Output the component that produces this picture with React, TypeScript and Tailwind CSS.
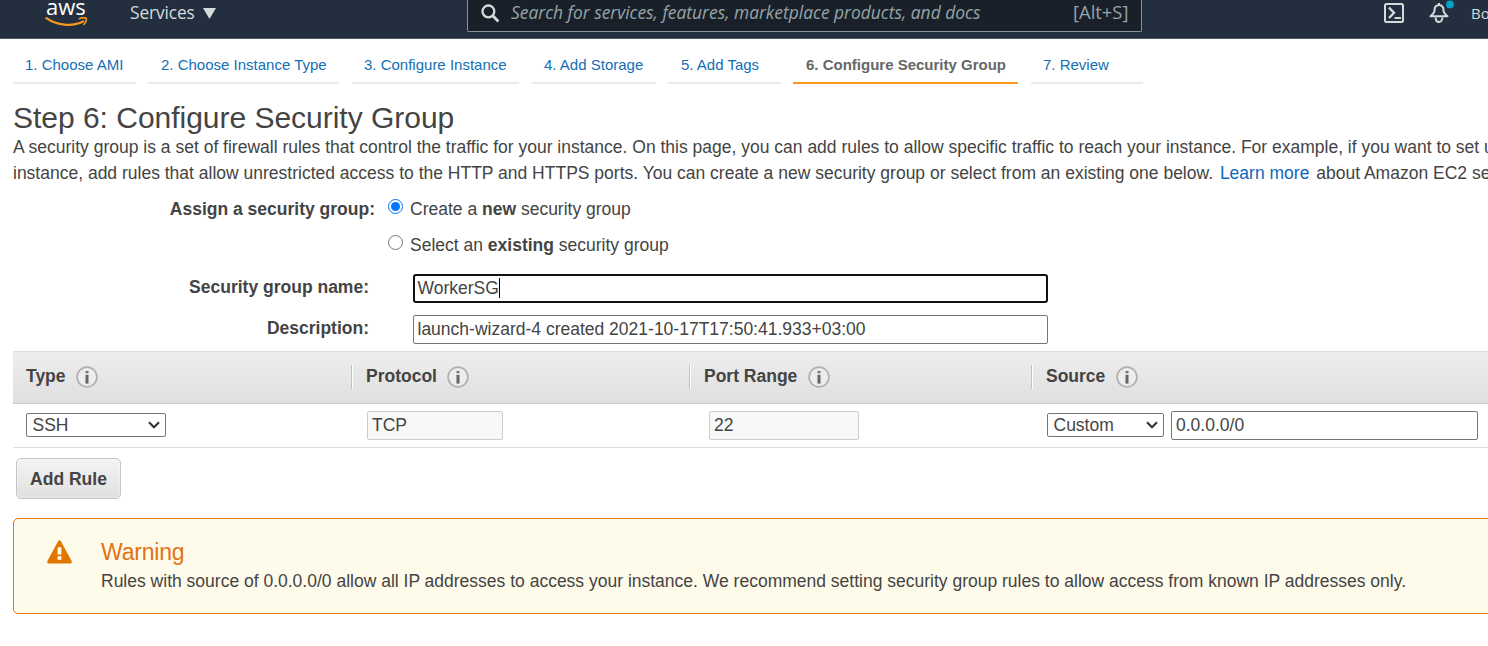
import type { ReactNode } from "react";

const tabs = [
  { label: "1. Choose AMI", box: "w-[123px] mr-[12px] pl-[12px]" },
  { label: "2. Choose Instance Type", box: "w-[191px] mr-[13px] pl-[13px]" },
  { label: "3. Configure Instance", box: "w-[167px] mr-[13px] pl-[12px]" },
  { label: "4. Add Storage", box: "w-[124px] mr-[12px] pl-[12px]" },
  { label: "5. Add Tags", box: "w-[113px] mr-[12px] pl-[13px]" },
  { label: "6. Configure Security Group", box: "w-[225px] mr-[13px] pl-[13px]", active: true },
  { label: "7. Review", box: "w-[112px] pl-[12px]" },
];

function InfoIcon() {
  return (
    <svg className="size-[22px] shrink-0" viewBox="0 0 22 22">
      <circle cx="11" cy="11" r="9.9" fill="#ededed" stroke="#b0b0b0" strokeWidth="1.7" />
      <rect x="9.5" y="4.9" width="3" height="2.3" fill="#777" />
      <rect x="9.5" y="8.8" width="3" height="8.8" fill="#666" />
    </svg>
  );
}

function HeadCell({ label, className, first }: { label: string; className: string; first?: boolean }) {
  return (
    <div className={`flex items-center pb-[1px] ${className}`}>
      {!first && <span className="mb-[1px] h-6 w-[2px] shrink-0 border-l border-[#c3c3c3] bg-white" />}
      <span className="mb-[3px] ml-[13px] whitespace-nowrap font-bold">{label}</span>
      <span className="ml-[10.5px] flex">
        <InfoIcon />
      </span>
    </div>
  );
}

function SelectBox({ value, className }: { value: string; className: string }) {
  return (
    <div
      className={`mb-[2px] flex h-6 items-center justify-between rounded-[2px] border border-[#767676] bg-white pl-[5.5px] pr-[5px] ${className}`}
    >
      <span>{value}</span>
      <svg className="mt-[1px] h-[8px] w-[12px]" viewBox="0 0 12 8" fill="none" stroke="#333" strokeWidth="2.1">
        <path d="M1 1.2 6 6.2 11 1.2" />
      </svg>
    </div>
  );
}

function Radio({ checked }: { checked?: boolean }) {
  return (
    <span
      className={`mb-[5px] mr-[7px] flex size-[15px] shrink-0 items-center justify-center rounded-full border bg-white ${
        checked ? "border-[#0075ff]" : "border-[#767676]"
      }`}
    >
      {checked && <span className="size-[9px] rounded-full bg-[#0075ff]" />}
    </span>
  );
}

function Label({ children, className }: { children: ReactNode; className: string }) {
  return <span className={`shrink-0 text-right font-bold ${className}`}>{children}</span>;
}

export default function App() {
  return (
    <div className="h-[646px] w-[1488px] overflow-hidden bg-white font-['Liberation_Sans',Arial,sans-serif] text-[17.5px] leading-[26px] text-[#444]">
      <header className="flex h-[39px] items-start overflow-hidden whitespace-nowrap border-b border-[#4d586a] bg-[#232f3e] font-['Open_Sans','Noto_Sans',sans-serif] text-[#d5dbdb]">
        <div className="ml-[45px] flex w-[85px] shrink-0 flex-col">
          <span className="-mt-[5px] ml-[1px] h-[22px] text-[22px] font-medium leading-[22px] text-white">aws</span>
          <svg className="h-[10px] w-[43px]" viewBox="0 0 43 10" fill="none">
            <path d="M1.4 1.1C12 8.5 27.5 9.9 38.2 4.5" stroke="#f7981f" strokeWidth="2.2" strokeLinecap="round" />
            <path d="M34.4 1.7C37 .7 40.4.7 41.2 1.3c.6.9-.3 4.2-2.2 6.2" stroke="#f7981f" strokeWidth="1.6" strokeLinecap="round" />
          </svg>
        </div>
        <div className="flex h-[26px] w-[337px] shrink-0 items-center">
          <span className="w-[65px] text-[17.3px] tracking-[-0.1px]">Services</span>
          <svg className="ml-[8px] h-[11px] w-[13px]" viewBox="0 0 13 11">
            <path d="M0 0h13L6.5 11z" fill="#d5dbdb" />
          </svg>
        </div>
        <div className="flex h-[32px] w-[675px] shrink-0 items-start rounded-b-[2px] border-x border-b border-[#879596] bg-[#1a202a] text-[17.4px] text-[#95a5a6]">
          <svg className="ml-[13px] mt-[4px] size-[19px] shrink-0" viewBox="0 0 19 19" fill="none" stroke="#d5dbdb">
            <circle cx="7.4" cy="7.4" r="5.9" strokeWidth="2.3" />
            <path d="m11.8 11.8 5.6 5.6" strokeWidth="2.8" />
          </svg>
          <span className="ml-[11px] w-[562px] shrink-0 italic leading-[24px]">
            Search for services, features, marketplace products, and docs
          </span>
          <span className="text-[18.4px] leading-[24px]">[Alt+S]</span>
        </div>
        <svg className="ml-[241px] mt-[2px] size-[22px] shrink-0" viewBox="0 0 22 22" fill="none" stroke="#d5dbdb" strokeWidth="2">
          <rect x="2" y="2" width="18" height="18" rx="1.5" />
          <path d="m6 5.6 5 5.2-5 5.2" strokeWidth="2.3" />
          <path d="M11.5 16H18" />
        </svg>
        <svg className="ml-[23px] h-[24px] w-[26px] shrink-0" viewBox="0 0 26 24" fill="none" stroke="#d5dbdb" strokeWidth="2">
          <path d="M10.5 5C7.2 5.500 6.500 8.500 6.500 10.200c0 2.600-1.600 4.100-4 6.100h17c-2.400-2-4-3.500-4-6.100C15.500 8.500 14.800 5.500 11.500 5z" strokeLinejoin="round" />
          <path d="M11 3v2.200M7.700 17.500c0 6 6.600 6 6.600 0" />
          <circle cx="22" cy="4.400" r="3.900" fill="#00a1c9" stroke="none" />
        </svg>
        <span className="ml-[17px] text-[15px] leading-[27px]">Bo</span>
      </header>

      <nav className="ml-[13px] flex h-[45px] items-end text-[15px]">
        {tabs.map((t) => (
          <div
            key={t.label}
            className={`flex h-[32px] shrink-0 whitespace-nowrap border-b-2 leading-[26px] ${t.box} ${
              t.active ? "border-[#f8991d] font-bold text-[#666]" : "border-[#eaeaea] text-[#146eb4]"
            }`}
          >
            {t.label}
          </div>
        ))}
      </nav>

      <main className="pl-[13px]">
        <h1 className="mt-[17px] h-[33px] whitespace-nowrap text-[30px] leading-[34px] tracking-[-0.02px]">
          Step 6: Configure Security Group
        </h1>
        <p className="whitespace-nowrap">
          A security group is a set of firewall rules that control the traffic for your instance. On this page, you can add rules to
          allow specific traffic to reach your instance. For example, if you want to set up
        </p>
        <p className="whitespace-nowrap">
          instance, add rules that allow unrestricted access to the HTTP and HTTPS ports. You can create a new security group or
          select from an existing one below. <span className="ml-[2px] mr-[2px] text-[#1166bb]">Learn more</span> about Amazon EC2
          security
        </p>

        <div className="mt-[5px] flex h-[36px] items-center">
          <Label className="mr-[13px] w-[362px]">Assign a security group:</Label>
          <Radio checked />
          <span>
            Create a <b>new</b> security group
          </span>
        </div>
        <div className="flex h-[36px] items-center">
          <span className="w-[375px]" />
          <Radio />
          <span>
            Select an <b>existing</b> security group
          </span>
        </div>
        <div className="mt-[11px] flex h-[29px] items-center">
          <Label className="mb-[3px] mr-[44px] w-[356px]">Security group name:</Label>
          <div className="flex h-[29px] w-[635px] items-center rounded-[3px] border-2 border-[#101010] pb-[1px] pl-[2.5px]">
            WorkerSG
            <span className="h-[20px] w-px bg-black" />
          </div>
        </div>
        <div className="mt-[12px] flex h-[29px] items-center">
          <Label className="mb-[3px] mr-[44px] w-[356px]">Description:</Label>
          <div className="flex h-[29px] w-[635px] items-center rounded-[2px] border border-[#767676] pb-[1px] pl-[3.5px]">
            launch-wizard-4 created 2021-10-17T17:50:41.933+03:00
          </div>
        </div>

        <div className="mt-[7px] flex h-[53px] border-y border-b-[#c8c8c8] border-t-[#dddddd] bg-linear-to-b from-[#eeeeee] to-[#dfdfdf]">
          <HeadCell first label="Type" className="w-[338px]" />
          <HeadCell label="Protocol" className="w-[338px]" />
          <HeadCell label="Port Range" className="w-[342px]" />
          <HeadCell label="Source" className="w-[457px]" />
        </div>
        <div className="flex h-[44px] items-center border-b border-[#dddddd] pl-[13px]">
          <SelectBox value="SSH" className="mr-[201px] w-[140px]" />
          <div className="mr-[206px] flex h-[29px] w-[136px] items-center rounded-[2px] border border-[#cccccc] bg-[#f8f8f8] pb-[1px] pl-[4px]">
            TCP
          </div>
          <div className="mr-[188px] flex h-[29px] w-[150px] items-center rounded-[2px] border border-[#cccccc] bg-[#f8f8f8] pb-[1px] pl-[4px]">
            22
          </div>
          <SelectBox value="Custom" className="mr-[7px] w-[117px]" />
          <div className="flex h-[29px] w-[307px] items-center rounded-[2px] border border-[#767676] bg-white pb-[1px] pl-[4px]">
            0.0.0.0/0
          </div>
        </div>

        <button className="ml-[3px] mt-[10px] flex h-[41px] w-[105px] items-center justify-center whitespace-nowrap rounded-[5px] border border-[#c4c4c4] bg-linear-to-b from-[#f4f4f4] to-[#e0e0e0] font-bold shadow-[inset_0_0_2px_#fff]">
          Add Rule
        </button>

        <section className="mt-[19px] flex h-[96px] w-[1600px] rounded-[5px] border border-[#df7b0c] bg-[#fffbea]">
          <svg className="ml-[33px] mt-[21px] h-[24px] w-[25px]" viewBox="0 0 25 24">
            <path d="M11.2.9c.6-1 2-1 2.6 0l10.8 20.2c.6 1.2-.2 2.4-1.400 2.400H1.800C.6 23.500-.2 22.300.4 21.100z" fill="#e07700" />
            <path d="M10.600 7.200h3.800v7.200h-3.800zM10.600 16.200h3.800v3.600h-3.800z" fill="#fffbea" />
          </svg>
          <div className="ml-[29px] mt-[20px] whitespace-nowrap">
            <h2 className="h-[29px] text-[23px] leading-[26px] tracking-[-0.2px] text-[#e07415]">Warning</h2>
            <p>
              Rules with source of 0.0.0.0/0 allow all IP addresses to access your instance. We recommend setting security group
              rules to allow access from known IP addresses only.
            </p>
          </div>
        </section>
      </main>
    </div>
  );
}
